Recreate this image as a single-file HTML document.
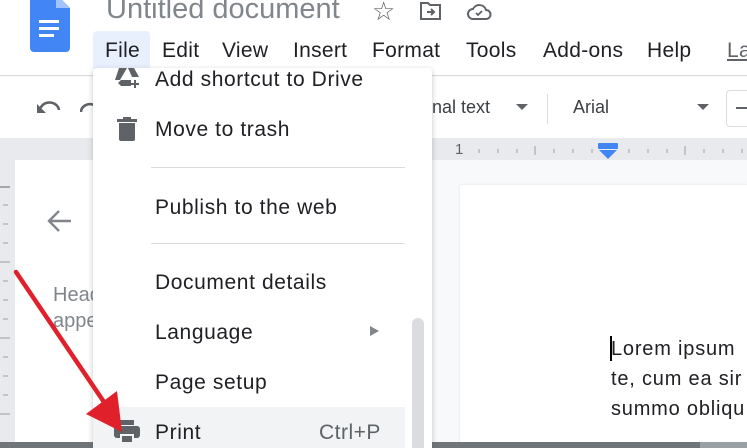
<!DOCTYPE html>
<html style="overflow:hidden;height:448px"><head><meta charset="utf-8"><style>
*{margin:0;padding:0;box-sizing:border-box}
body{width:747px;height:448px;overflow:hidden;position:relative;background:#f8f9fa;font-family:"Liberation Sans",Arial,sans-serif;color:#202124}
.a{position:absolute}
.mi{position:absolute;left:155px;font-size:21px;letter-spacing:.6px;color:#202124;white-space:nowrap}
.mb{position:absolute;top:39px;font-size:21px;letter-spacing:.3px;white-space:nowrap}
</style></head><body>
<div class="a" style="left:0;top:0;width:747px;height:76px;background:#fff;border-bottom:1px solid #dadce0"></div>
<svg class="a" style="left:28px;top:0" width="44" height="54" viewBox="0 0 44 54">
<path d="M4 -6 H28 L42 8 V48 a4 4 0 0 1 -4 4 H6 a4 4 0 0 1 -4 -4 V-2 Z" fill="#4285f4"/>
<path d="M28 -6 V8 H42 Z" fill="#a1c2fa"/>
<rect x="11" y="20" width="20" height="3" fill="#fff"/><rect x="11" y="27" width="20" height="3" fill="#fff"/><rect x="11" y="34" width="15" height="3" fill="#fff"/>
</svg>
<div class="a" style="left:106px;top:-7px;font-size:29px;color:#80868b;white-space:nowrap">Untitled document</div>
<div class="a" style="left:372px;top:-4px;font-size:26px;color:#5f6368">☆</div>
<svg class="a" style="left:419px;top:1px" width="24" height="20" viewBox="0 0 24 20"><path d="M2 2h7l2 2h10v14H2z" fill="none" stroke="#5f6368" stroke-width="2"/><path d="M8 11h7M12 8l3 3-3 3" fill="none" stroke="#5f6368" stroke-width="2"/></svg>
<svg class="a" style="left:466px;top:1px" width="26" height="20" viewBox="0 0 26 20"><path d="M7 18a5 5 0 0 1 0-10 7 7 0 0 1 13 1 4.5 4.5 0 0 1 0 9z" fill="none" stroke="#5f6368" stroke-width="2"/><path d="M10 12l2 2 4-4" fill="none" stroke="#5f6368" stroke-width="1.8"/></svg>
<div class="a" style="left:93px;top:31px;width:57px;height:38px;background:#e8f0fe;border-radius:4px 4px 0 0"></div>
<div class="mb" style="left:105px">File</div>
<div class="mb" style="left:162px">Edit</div>
<div class="mb" style="left:222px">View</div>
<div class="mb" style="left:293px">Insert</div>
<div class="mb" style="left:372px">Format</div>
<div class="mb" style="left:466px">Tools</div>
<div class="mb" style="left:543px">Add-ons</div>
<div class="mb" style="left:647px">Help</div>
<div class="mb" style="left:727px;color:#5f6368;text-decoration:underline">La</div>
<div class="a" style="left:0;top:77px;width:747px;height:61px;background:#fff"></div>
<svg class="a" style="left:36px;top:98px" width="26" height="20" viewBox="0 0 26 20"><path d="M4 14a9 8 0 0 1 19-2" fill="none" stroke="#5f6368" stroke-width="2.6"/><path d="M1 6v9h9z" fill="#5f6368"/></svg>
<svg class="a" style="left:80px;top:98px" width="14" height="20"><path d="M1 14a9 8 0 0 1 13-7" fill="none" stroke="#5f6368" stroke-width="2.6"/></svg>
<div class="a" style="left:432px;top:97px;font-size:18px;color:#3c4043">nal text</div>
<div class="a" style="left:516px;top:104px;border:6px solid transparent;border-top:6px solid #5f6368"></div>
<div class="a" style="left:547px;top:94px;width:1px;height:30px;background:#dadce0"></div>
<div class="a" style="left:573px;top:97px;font-size:18px;color:#3c4043">Arial</div>
<div class="a" style="left:697px;top:104px;border:6px solid transparent;border-top:6px solid #5f6368"></div>
<div class="a" style="left:726px;top:90px;width:30px;height:37px;border:1px solid #dadce0;border-radius:4px"></div>
<div class="a" style="left:736px;top:107px;width:11px;height:2px;background:#5f6368"></div>
<div class="a" style="left:0;top:138px;width:747px;height:22px;background:#e8eaed"></div>
<div class="a" style="left:455px;top:141px;font-size:15px;color:#5f6368">1</div>
<svg class="a" style="left:470px;top:140px" width="277" height="20">
<g stroke="#9aa0a6" stroke-width="1">
<line x1="9" y1="9" x2="9" y2="13"/><line x1="28" y1="9" x2="28" y2="13"/><line x1="47" y1="9" x2="47" y2="13"/><line x1="65" y1="6" x2="65" y2="15"/><line x1="84" y1="9" x2="84" y2="13"/><line x1="103" y1="9" x2="103" y2="13"/><line x1="122" y1="9" x2="122" y2="13"/>
<line x1="159" y1="9" x2="159" y2="13"/><line x1="178" y1="9" x2="178" y2="13"/><line x1="197" y1="9" x2="197" y2="13"/><line x1="215" y1="6" x2="215" y2="15"/><line x1="234" y1="9" x2="234" y2="13"/><line x1="253" y1="9" x2="253" y2="13"/><line x1="272" y1="9" x2="272" y2="13"/></g>
<rect x="128" y="3" width="20" height="6" rx="1" fill="#4285f4"/><path d="M129 10h18l-9 9z" fill="#4285f4"/>
</svg>
<div class="a" style="left:0;top:160px;width:15px;height:288px;background:#e8eaed"></div>
<svg class="a" style="left:0;top:160px" width="15" height="288"><g stroke="#9aa0a6"><line x1="0" y1="27" x2="10" y2="27" stroke="#5f6368"/><line x1="3" y1="45" x2="8" y2="45"/><line x1="3" y1="64" x2="8" y2="64"/><line x1="3" y1="83" x2="8" y2="83"/><line x1="0" y1="102" x2="10" y2="102"/><line x1="3" y1="121" x2="8" y2="121"/><line x1="3" y1="140" x2="8" y2="140"/><line x1="3" y1="159" x2="8" y2="159"/><line x1="0" y1="178" x2="10" y2="178"/><line x1="3" y1="197" x2="8" y2="197"/><line x1="3" y1="216" x2="8" y2="216"/><line x1="3" y1="235" x2="8" y2="235"/><line x1="0" y1="254" x2="10" y2="254"/></g></svg>
<div class="a" style="left:15px;top:160px;width:80px;height:288px;background:#fff"></div>
<svg class="a" style="left:45px;top:208px" width="28" height="26"><path d="M26 13H4M14 3L4 13l10 10" fill="none" stroke="#80868b" stroke-width="2.4"/></svg>
<div class="a" style="left:53px;top:282px;font-size:20px;color:#80868b;line-height:26px">Head<br>appe</div>
<div class="a" style="left:460px;top:185px;width:287px;height:258px;background:#fff;box-shadow:0 0 2px #dadce0"></div>
<div class="a" style="left:611px;top:334px;font-size:20px;letter-spacing:.8px;color:#202124;line-height:30px;white-space:nowrap">Lorem ipsum<br>te, cum ea sir<br>summo obliqu</div>
<div class="a" style="left:610px;top:336px;width:2px;height:25px;background:#000"></div>
<div class="a" style="left:0;top:442px;width:747px;height:6px;background:#9aa0a6"></div>
<div class="a" style="left:0;top:442px;width:700px;height:6px;background:#70757a"></div>
<div class="a" style="left:93px;top:68px;width:339px;height:380px;background:#fff;box-shadow:0 2px 6px rgba(60,64,67,.3);border-radius:4px 4px 0 0"></div>
<svg class="a" style="left:115px;top:68px" width="26" height="22" viewBox="0 0 26 22"><path d="M4 0h8l-7 12H0z" fill="#5f6368"/><path d="M13 0h6l5 9h-7z" fill="#5f6368"/><path d="M3 15l3-3h10v6H6z" fill="#5f6368"/><path d="M20 12v8M16 16h8" stroke="#5f6368" stroke-width="2"/></svg>
<div class="mi" style="top:68px">Add shortcut to Drive</div>
<svg class="a" style="left:117px;top:117px" width="20" height="24"><rect x="0" y="2" width="20" height="3" fill="#5f6368"/><rect x="6" y="0" width="8" height="3" fill="#5f6368"/><path d="M2 6h16v16a2 2 0 0 1-2 2H4a2 2 0 0 1-2-2z" fill="#5f6368"/></svg>
<div class="mi" style="top:118px">Move to trash</div>
<div class="a" style="left:151px;top:167px;width:254px;height:1px;background:#dadce0"></div>
<div class="mi" style="top:196px">Publish to the web</div>
<div class="a" style="left:151px;top:243px;width:254px;height:1px;background:#dadce0"></div>
<div class="mi" style="top:271px">Document details</div>
<div class="mi" style="top:321px">Language</div>
<div class="a" style="left:370px;top:326px;border:5px solid transparent;border-left:9px solid #80868b"></div>
<div class="mi" style="top:371px">Page setup</div>
<div class="a" style="left:93px;top:407px;width:312px;height:41px;background:#f1f3f4"></div>
<svg class="a" style="left:114px;top:420px" width="26" height="24" viewBox="0 0 26 24"><rect x="6" y="0" width="14" height="5" fill="#5f6368"/><rect x="0" y="6" width="26" height="12" rx="3" fill="#5f6368"/><rect x="6" y="14" width="14" height="10" fill="#f1f3f4"/><rect x="8" y="16" width="10" height="6" fill="#5f6368"/></svg>
<div class="mi" style="top:421px">Print</div>
<div class="a" style="left:319px;top:421px;font-size:21px;letter-spacing:.5px;color:#5f6368">Ctrl+P</div>
<div class="a" style="left:412px;top:318px;width:12px;height:130px;background:#dadce0;border-radius:6px 6px 0 0"></div>
<svg class="a" style="left:0;top:260px" width="150" height="188"><line x1="16" y1="12" x2="108" y2="148" stroke="#e0202a" stroke-width="4.5" stroke-linecap="round"/><path d="M86 154 L122 172 L117 131 Z" fill="#e0202a"/></svg>
</body></html>
